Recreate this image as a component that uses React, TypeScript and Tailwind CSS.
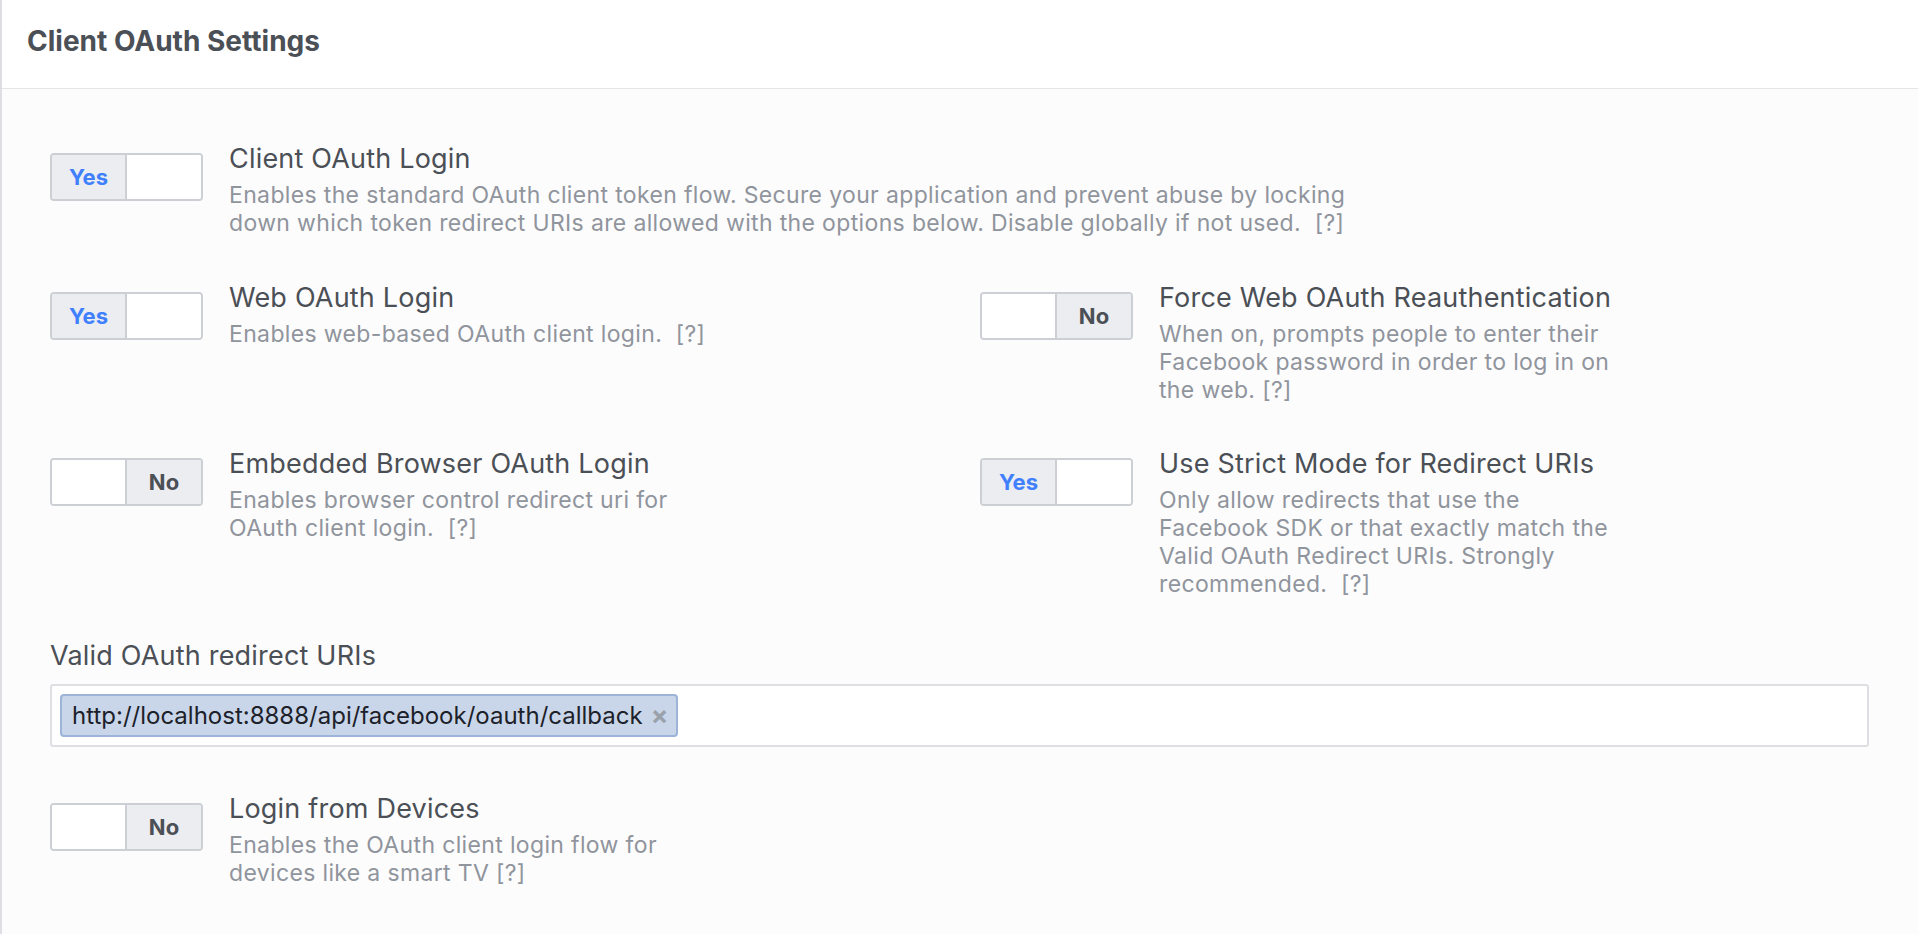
import React from "react";

type Setting = {
    title: string;
    desc: React.ReactNode;
    on: boolean;
};

function Toggle({ on }: { on: boolean }) {
    return (
        <div className="mt-[11px] flex h-[48px] w-[153px] shrink-0 overflow-hidden rounded-[4px] border-2 border-[#ccd0d5] bg-white">
            {on ? (
                <>
                    <div className="flex w-[75px] items-center justify-center border-r-2 border-[#ccd0d5] bg-[#ebedf0] text-[22px] font-bold text-[#4080ff]">
                        Yes
                    </div>
                    <div className="flex-1 bg-white" />
                </>
            ) : (
                <>
                    <div className="w-[75px] border-r-2 border-[#ccd0d5] bg-white" />
                    <div className="flex flex-1 items-center justify-center bg-[#ebedf0] text-[22px] font-bold text-[#4b4f56]">
                        No
                    </div>
                </>
            )}
        </div>
    );
}

function SettingRow({ title, desc, on, width }: Setting & { width: string }) {
    return (
        <div className="flex gap-[26px]">
            <Toggle on={on} />
            <div className={`pt-[1px] ${width}`}>
                <div className="text-[27px] leading-[32px] tracking-[0.2px] text-[#4b4f56]">{title}</div>
                <div className="mt-[6px] text-[23px] leading-[28px] tracking-[0.35px] text-[#90949c]">{desc}</div>
            </div>
        </div>
    );
}

export default function App() {
    return (
        <div className="min-h-screen border-l-2 border-[#dddfe2] bg-[#fcfcfc] font-['Inter','Liberation_Sans',sans-serif]">
            <div className="flex h-[89px] items-center border-b border-[#e5e5e5] bg-white pb-[6px] pl-[25px]">
                <h2 className="text-[28px] font-bold text-[#4b4f56]">Client OAuth Settings</h2>
            </div>

            <div className="pl-[48px] pr-[49px] pt-[53px] pb-[40px]">
                <SettingRow
                    on
                    width="w-[1150px]"
                    title="Client OAuth Login"
                    desc={<>Enables the standard OAuth client token flow. Secure your application and prevent abuse by locking down which token redirect URIs are allowed with the options below. Disable globally if not used.&nbsp; [?]</>}
                />

                <div className="mt-[44px] grid grid-cols-2 gap-x-[41px] gap-y-[43px]">
                    <SettingRow
                        on
                        width="w-[520px]"
                        title="Web OAuth Login"
                        desc={<>Enables web-based OAuth client login.&nbsp; [?]</>}
                    />
                    <SettingRow
                        on={false}
                        width="w-[470px]"
                        title="Force Web OAuth Reauthentication"
                        desc={<>When on, prompts people to enter their Facebook password in order to log in on the web. [?]</>}
                    />
                    <SettingRow
                        on={false}
                        width="w-[470px]"
                        title="Embedded Browser OAuth Login"
                        desc={<>Enables browser control redirect uri for OAuth client login.&nbsp; [?]</>}
                    />
                    <SettingRow
                        on
                        width="w-[470px]"
                        title="Use Strict Mode for Redirect URIs"
                        desc={<>Only allow redirects that use the Facebook SDK or that exactly match the Valid OAuth Redirect URIs. Strongly recommended.&nbsp; [?]</>}
                    />
                </div>

                <div className="mt-[42px]">
                    <div className="text-[27px] leading-[32px] tracking-[0.2px] text-[#4b4f56]">Valid OAuth redirect URIs</div>
                    <div className="mt-[12px] flex h-[63px] items-center rounded-[3px] border-2 border-[#dddfe2] bg-white pl-[8px]">
                        <span className="flex h-[43px] items-center gap-[8px] rounded-[4px] border-2 border-[#9cb4d8] bg-[#c9d6ea] pl-[10px] pr-[8px] text-[24px] text-[#1d2129]">
                            http://localhost:8888/api/facebook/oauth/callback
                            <span className="text-[26px] font-bold leading-none text-[#9aa1ab]">×</span>
                        </span>
                    </div>
                </div>

                <div className="mt-[45px]">
                    <SettingRow
                        on={false}
                        width="w-[470px]"
                        title="Login from Devices"
                        desc={<>Enables the OAuth client login flow for devices like a smart TV [?]</>}
                    />
                </div>
            </div>
        </div>
    );
}
